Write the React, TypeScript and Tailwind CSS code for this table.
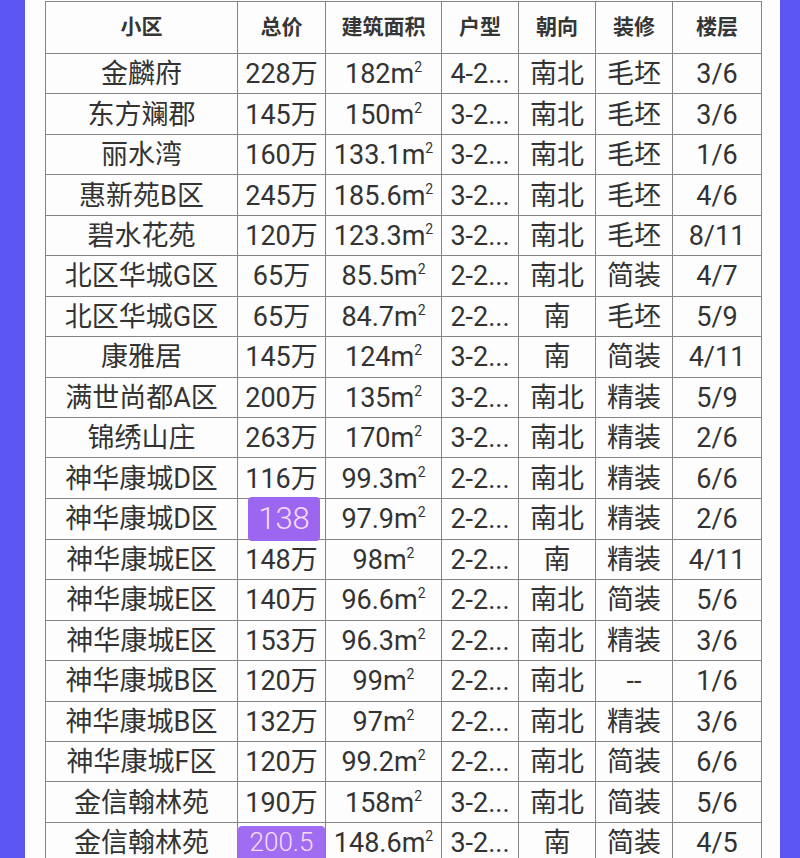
import React from "react";

type Row = [string, string, string, string, string, string, string];

const rows: Row[] = [
  ["金麟府", "228万", "182", "4-2...", "南北", "毛坯", "3/6"],
  ["东方斓郡", "145万", "150", "3-2...", "南北", "毛坯", "3/6"],
  ["丽水湾", "160万", "133.1", "3-2...", "南北", "毛坯", "1/6"],
  ["惠新苑B区", "245万", "185.6", "3-2...", "南北", "毛坯", "4/6"],
  ["碧水花苑", "120万", "123.3", "3-2...", "南北", "毛坯", "8/11"],
  ["北区华城G区", "65万", "85.5", "2-2...", "南北", "简装", "4/7"],
  ["北区华城G区", "65万", "84.7", "2-2...", "南", "毛坯", "5/9"],
  ["康雅居", "145万", "124", "3-2...", "南", "简装", "4/11"],
  ["满世尚都A区", "200万", "135", "3-2...", "南北", "精装", "5/9"],
  ["锦绣山庄", "263万", "170", "3-2...", "南北", "精装", "2/6"],
  ["神华康城D区", "116万", "99.3", "2-2...", "南北", "精装", "6/6"],
  ["神华康城D区", "#138", "97.9", "2-2...", "南北", "精装", "2/6"],
  ["神华康城E区", "148万", "98", "2-2...", "南", "精装", "4/11"],
  ["神华康城E区", "140万", "96.6", "2-2...", "南北", "简装", "5/6"],
  ["神华康城E区", "153万", "96.3", "2-2...", "南北", "精装", "3/6"],
  ["神华康城B区", "120万", "99", "2-2...", "南北", "--", "1/6"],
  ["神华康城B区", "132万", "97", "2-2...", "南北", "精装", "3/6"],
  ["神华康城F区", "120万", "99.2", "2-2...", "南北", "简装", "6/6"],
  ["金信翰林苑", "190万", "158", "3-2...", "南北", "简装", "5/6"],
  ["金信翰林苑", "#200.5", "148.6", "3-2...", "南", "简装", "4/5"],
];

const headers = ["小区", "总价", "建筑面积", "户型", "朝向", "装修", "楼层"];
const widths = ["w-[192px]", "w-[88px]", "w-[116px]", "w-[77px]", "w-[77px]", "w-[77px]", "w-[89px]"];

const font = { fontFamily: '"Roboto", "Noto Sans CJK SC", sans-serif' };

export default function App() {
  return (
    <div className="flex h-[858px] w-[800px] overflow-hidden bg-[#fdfdfd]" style={font}>
      <div className="w-[25px] shrink-0 bg-[#5b55f1]" />
      <div className="w-[20px] shrink-0" />
      <div className="w-[716px] shrink-0 pt-[1px]">
        <table className="w-[716px] table-fixed border-collapse text-[#333333]">
          <colgroup>
            {widths.map((w, i) => (
              <col key={i} className={w} />
            ))}
          </colgroup>
          <thead>
            <tr className="h-[52px]">
              {headers.map((h) => (
                <th
                  key={h}
                  className="border border-[#858585] p-0 text-center text-[21px] font-bold leading-none text-[#363636]"
                >
                  {h}
                </th>
              ))}
            </tr>
          </thead>
          <tbody>
            {rows.map((r, i) => (
              <tr key={i} className="h-[40.45px]">
                {r.map((c, j) => {
                  if (j === 1 && c.startsWith("#")) {
                    const isLast = i === rows.length - 1;
                    return (
                      <td key={j} className="border border-[#858585] p-0 text-center">
                        {isLast ? (
                          <div className="flex h-[40px] items-start justify-center pt-[3px]">
                            <div className="flex h-[37px] w-full items-start justify-center rounded-t-[4px] bg-[#9f6cf2] pt-[3px]">
                              <span className="block h-[26px] text-[26px] font-light leading-[26px] text-[#f7dcf4]">
                                {c.slice(1)}
                              </span>
                            </div>
                          </div>
                        ) : (
                          <div className="flex h-[40px] items-center justify-center pl-[10px] pr-[5px]">
                            <span className="flex h-[44px] w-full items-center justify-center rounded-[4px] bg-[#9c66f1] text-[31px] font-light leading-none text-[#f7dcf4]">
                              {c.slice(1)}
                            </span>
                          </div>
                        )}
                      </td>
                    );
                  }
                  return (
                    <td
                      key={j}
                      className="overflow-hidden whitespace-nowrap border border-[#858585] p-0 pt-[2px] text-center text-[27px] leading-none"
                    >
                      {j === 2 ? (
                        <span>
                          {c}m<span className="relative top-[-11px] text-[14px]">2</span>
                        </span>
                      ) : (
                        c
                      )}
                    </td>
                  );
                })}
              </tr>
            ))}
          </tbody>
        </table>
      </div>
      <div className="w-[19px] shrink-0" />
      <div className="w-[20px] shrink-0 bg-[#5b55f1]" />
    </div>
  );
}
